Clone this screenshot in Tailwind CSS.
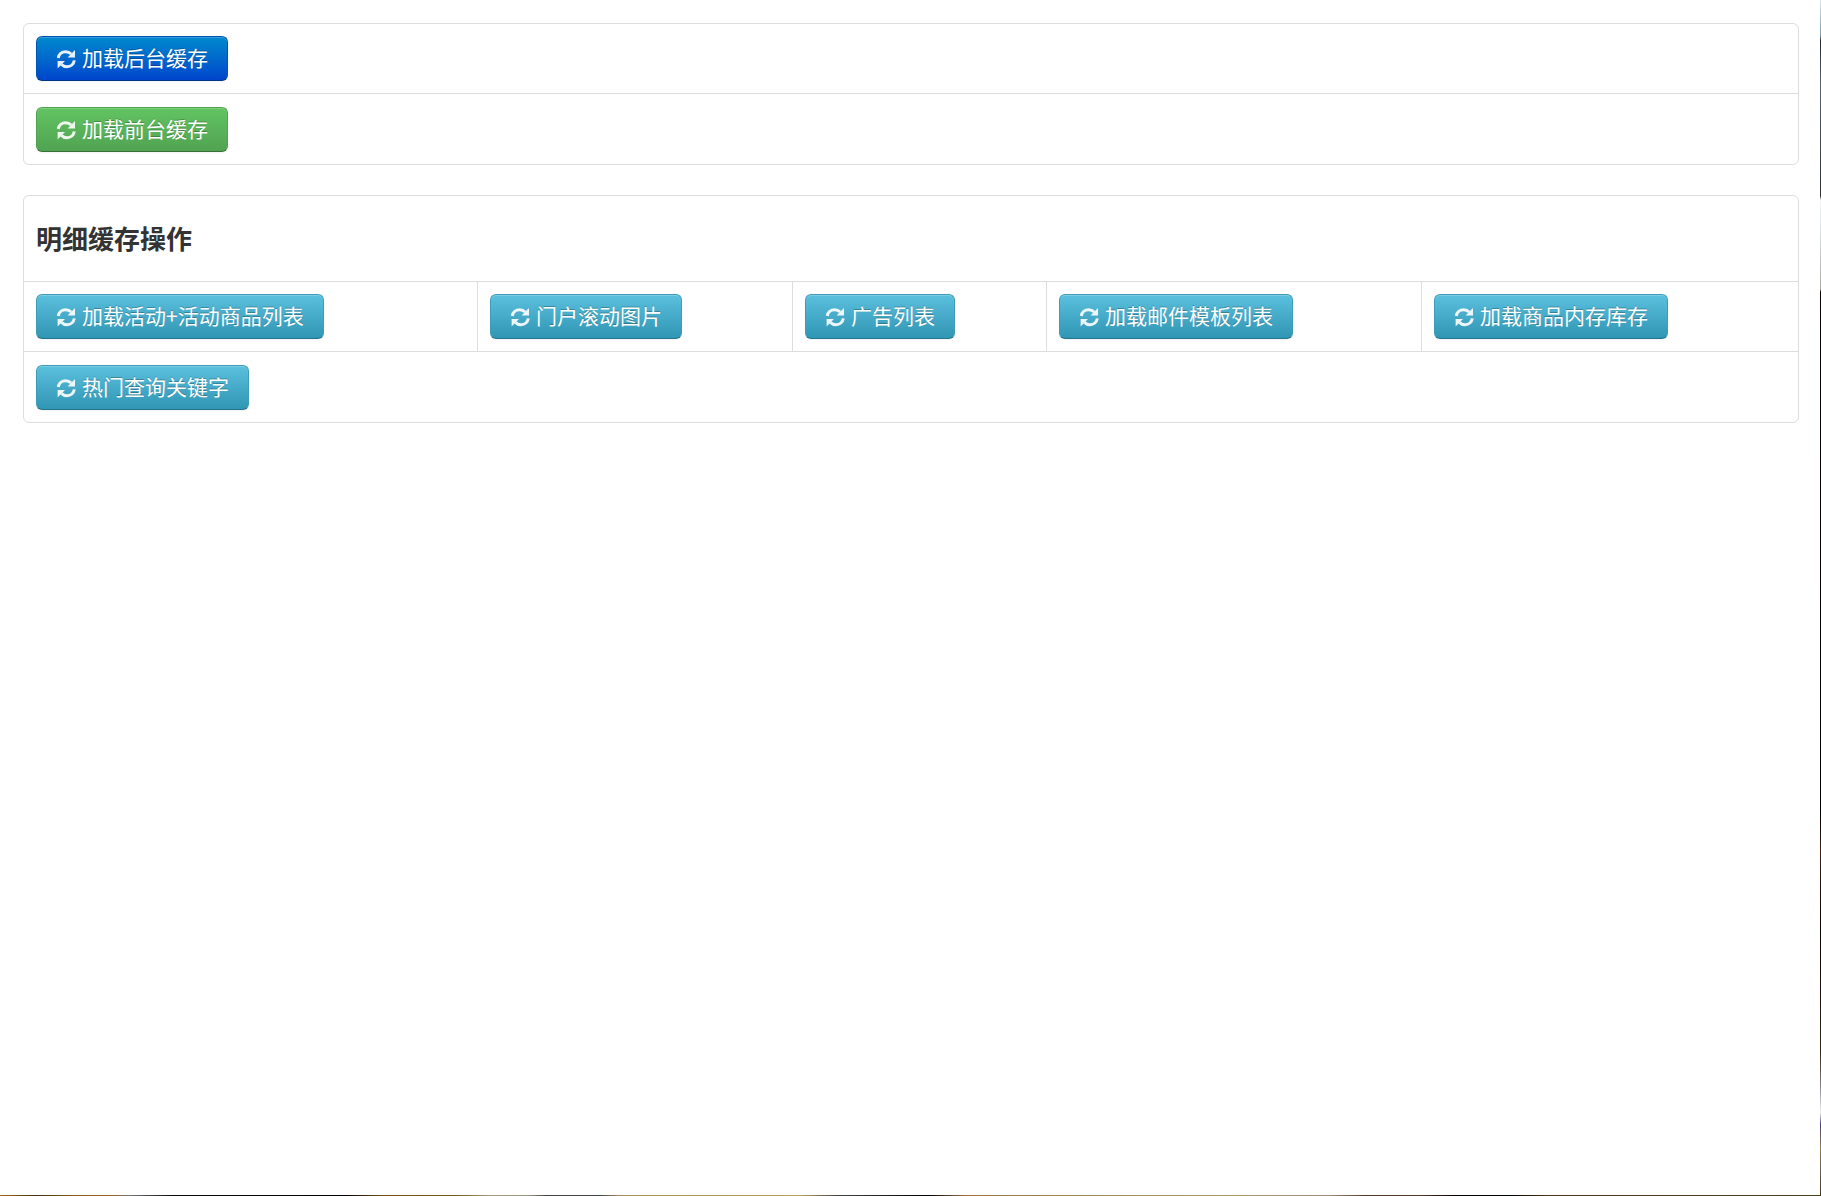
<!DOCTYPE html>
<html lang="zh-CN">
<head>
<meta charset="utf-8">
<meta name="viewport" content="width=device-width, initial-scale=1">
<title>缓存操作</title>
<script src="https://cdn.jsdelivr.net/npm/@tailwindcss/browser@4"></script>
</head>
<body class="grid min-h-screen grid-cols-[1fr_1px] grid-rows-[1fr_1px] bg-white text-[#333]">
<main class="min-w-0 pt-[23px] pr-[21px] pl-[23px] font-['Noto_Sans_CJK_SC',sans-serif]">
  <svg class="hidden" aria-hidden="true">
    <symbol id="refresh" viewBox="0 0 20 20">
      <path d="M2.300 9C2.800 5.300 5.800 2.700 9.700 2.700c2.200 0 4.100.9 5.500 2.300" fill="none" stroke="currentColor" stroke-width="3"/>
      <path d="M19 1v7.400h-7.400z" fill="currentColor"/>
      <path d="M18.300 11.400c-.5 3.700-3.500 6.300-7.400 6.300-2.200 0-4.100-.9-5.500-2.300" fill="none" stroke="currentColor" stroke-width="3"/>
      <path d="M1.600 19.400v-7.400h7.400z" fill="currentColor"/>
    </symbol>
  </svg>
  <section class="rounded-md border border-[#ddd]">
    <div class="flex px-3 pt-3 pb-3">
      <button type="button" class="flex h-[45px] items-center gap-[6px] rounded-md border border-[#0055b3] border-b-[#003580] bg-linear-to-b from-[#0088cc] to-[#0044cc] px-[19px] text-[21px] leading-[30px] whitespace-nowrap text-white shadow-[inset_0_1px_0_rgba(255,255,255,0.2),0_1px_2px_rgba(0,0,0,0.05)] text-shadow-[0_-1px_0_rgba(0,0,0,0.25)]"><svg class="size-5 shrink-0 opacity-90" aria-hidden="true"><use href="#refresh"/></svg><span class="pb-[3px]">加载后台缓存</span></button>
    </div>
    <div class="flex border-t border-[#ddd] px-3 pt-[13px] pb-3">
      <button type="button" class="flex h-[45px] items-center gap-[6px] rounded-md border border-[#51a351] border-b-[#387038] bg-linear-to-b from-[#62c462] to-[#51a351] px-[19px] text-[21px] leading-[30px] whitespace-nowrap text-white shadow-[inset_0_1px_0_rgba(255,255,255,0.2),0_1px_2px_rgba(0,0,0,0.05)] text-shadow-[0_-1px_0_rgba(0,0,0,0.25)]"><svg class="size-5 shrink-0 opacity-90" aria-hidden="true"><use href="#refresh"/></svg><span class="pb-[3px]">加载前台缓存</span></button>
    </div>
  </section>

  <section class="mt-[30px] rounded-md border border-[#ddd]">
    <h3 class="flex h-[85px] items-center px-3 pb-[2px] text-[26px] leading-[60px] font-bold">明细缓存操作</h3>
    <div class="grid grid-cols-[453fr_315fr_254fr_375fr_377fr] border-t border-[#ddd]">
      <div class="flex px-3 py-3">
        <button type="button" class="flex h-[45px] items-center gap-[6px] rounded-md border border-[#3f9cb8] border-b-[#24748c] bg-linear-to-b from-[#5bc0de] to-[#2f96b4] px-[19px] text-[21px] leading-[30px] whitespace-nowrap text-white shadow-[inset_0_1px_0_rgba(255,255,255,0.2),0_1px_2px_rgba(0,0,0,0.05)] text-shadow-[0_-1px_0_rgba(0,0,0,0.25)]"><svg class="size-5 shrink-0 opacity-90" aria-hidden="true"><use href="#refresh"/></svg><span class="pb-[3px]">加载活动+活动商品列表</span></button>
      </div>
      <div class="flex border-l border-[#ddd] px-3 py-3">
        <button type="button" class="flex h-[45px] items-center gap-[6px] rounded-md border border-[#3f9cb8] border-b-[#24748c] bg-linear-to-b from-[#5bc0de] to-[#2f96b4] px-[19px] text-[21px] leading-[30px] whitespace-nowrap text-white shadow-[inset_0_1px_0_rgba(255,255,255,0.2),0_1px_2px_rgba(0,0,0,0.05)] text-shadow-[0_-1px_0_rgba(0,0,0,0.25)]"><svg class="size-5 shrink-0 opacity-90" aria-hidden="true"><use href="#refresh"/></svg><span class="pb-[3px]">门户滚动图片</span></button>
      </div>
      <div class="flex border-l border-[#ddd] px-3 py-3">
        <button type="button" class="flex h-[45px] items-center gap-[6px] rounded-md border border-[#3f9cb8] border-b-[#24748c] bg-linear-to-b from-[#5bc0de] to-[#2f96b4] px-[19px] text-[21px] leading-[30px] whitespace-nowrap text-white shadow-[inset_0_1px_0_rgba(255,255,255,0.2),0_1px_2px_rgba(0,0,0,0.05)] text-shadow-[0_-1px_0_rgba(0,0,0,0.25)]"><svg class="size-5 shrink-0 opacity-90" aria-hidden="true"><use href="#refresh"/></svg><span class="pb-[3px]">广告列表</span></button>
      </div>
      <div class="flex border-l border-[#ddd] px-3 py-3">
        <button type="button" class="flex h-[45px] items-center gap-[6px] rounded-md border border-[#3f9cb8] border-b-[#24748c] bg-linear-to-b from-[#5bc0de] to-[#2f96b4] px-[19px] text-[21px] leading-[30px] whitespace-nowrap text-white shadow-[inset_0_1px_0_rgba(255,255,255,0.2),0_1px_2px_rgba(0,0,0,0.05)] text-shadow-[0_-1px_0_rgba(0,0,0,0.25)]"><svg class="size-5 shrink-0 opacity-90" aria-hidden="true"><use href="#refresh"/></svg><span class="pb-[3px]">加载邮件模板列表</span></button>
      </div>
      <div class="flex border-l border-[#ddd] px-3 py-3">
        <button type="button" class="flex h-[45px] items-center gap-[6px] rounded-md border border-[#3f9cb8] border-b-[#24748c] bg-linear-to-b from-[#5bc0de] to-[#2f96b4] px-[19px] text-[21px] leading-[30px] whitespace-nowrap text-white shadow-[inset_0_1px_0_rgba(255,255,255,0.2),0_1px_2px_rgba(0,0,0,0.05)] text-shadow-[0_-1px_0_rgba(0,0,0,0.25)]"><svg class="size-5 shrink-0 opacity-90" aria-hidden="true"><use href="#refresh"/></svg><span class="pb-[3px]">加载商品内存库存</span></button>
      </div>
    </div>
    <div class="flex border-t border-[#ddd] px-3 pt-[13px] pb-3">
      <button type="button" class="flex h-[45px] items-center gap-[6px] rounded-md border border-[#3f9cb8] border-b-[#24748c] bg-linear-to-b from-[#5bc0de] to-[#2f96b4] px-[19px] text-[21px] leading-[30px] whitespace-nowrap text-white shadow-[inset_0_1px_0_rgba(255,255,255,0.2),0_1px_2px_rgba(0,0,0,0.05)] text-shadow-[0_-1px_0_rgba(0,0,0,0.25)]"><svg class="size-5 shrink-0 opacity-90" aria-hidden="true"><use href="#refresh"/></svg><span class="pb-[3px]">热门查询关键字</span></button>
    </div>
  </section>
</main>
<div class="row-span-2 bg-[linear-gradient(to_bottom,#d5e6f2_0%,#6f9bb8_3%,#222a30_3.4%,#54666f_7%,#303030_16.4%,#f4f4f4_16.7%,#e4e8ea_18.500%,#a8a8a4_24.200%,#0a0202_24.400%,#000_68%,#4a1a04_71%,#0a0400_78%,#3a2408_88%,#8a8a90_91%,#f0f0f0_93%,#4a3a80_94%,#a07a40_96%,#6a5a48_98%,#4a3810_100%)]"></div>
<div class="bg-[linear-gradient(to_right,#a6691c_0%,#4a2c08_2%,#8a5a18_4%,#a06428_6.300%,#777_7.100%,#0a0a0a_9.500%,#000_19%,#7a4c14_21%,#7a5520_25%,#aaa078_27%,#999988_29%,#444_30%,#444_33%,#b08c58_34%,#c09a60_44%,#444_46%,#000_51%,#a07040_53%,#b59a6a_68%,#a09070_73%,#5a3828_75%,#5a3828_78%,#000_80%,#000_83%,#503810_85%,#4c451a_100%)]"></div>
</body>
</html>
